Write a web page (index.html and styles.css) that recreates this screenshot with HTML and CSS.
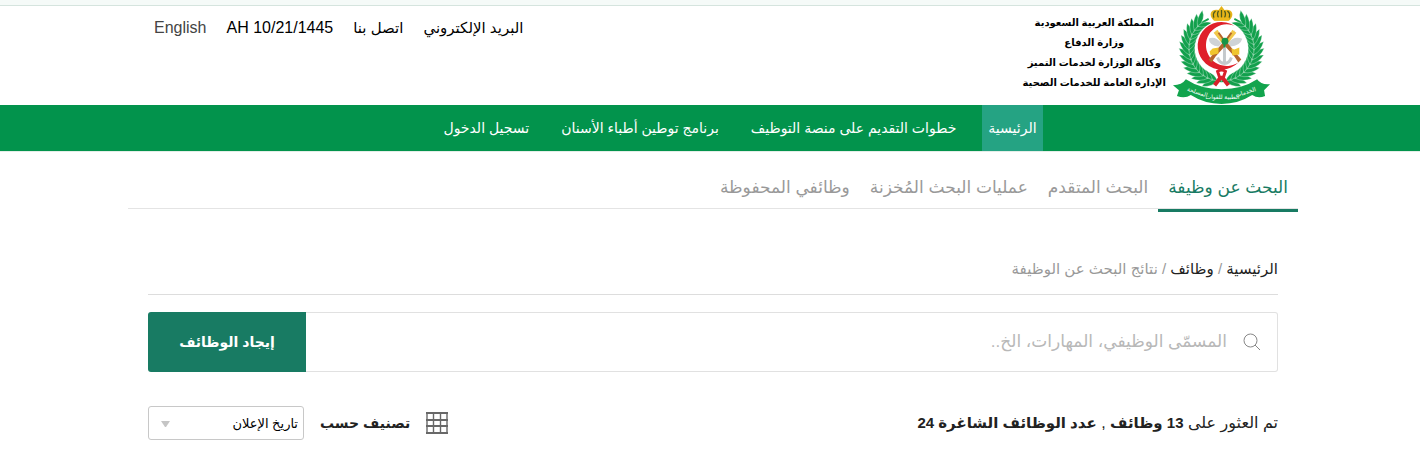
FILE: index.html
```html
<!DOCTYPE html>
<html lang="ar" dir="rtl">
<head>
<meta charset="utf-8">
<meta name="viewport" content="width=device-width, initial-scale=1">
<title>نتائج البحث عن الوظيفة</title>
<link rel="stylesheet" href="styles.css">
</head>
<body>
<div class="top-strip"></div>
<header class="header">
  <div class="brand">
    <svg class="emblem" viewBox="0 0 100 100" role="img" aria-label="شعار الخدمات الصحية">
      <defs>
        <g id="leaf">
          <path d="M17 47Q10 43 8 33Q17 36 18 47Z"/>
          <path d="M17 47Q24 43 24 34Q17 37 17 47Z"/>
        </g>
        <g id="branch">
          <path d="M50 76A33 33 0 0 1 37 13" fill="none" stroke="#16a34f" stroke-width="2"/>
          <use href="#leaf" transform="rotate(-76 50 43)"/>
          <use href="#leaf" transform="rotate(-67 50 43)"/>
          <use href="#leaf" transform="rotate(-58 50 43)"/>
          <use href="#leaf" transform="rotate(-49 50 43)"/>
          <use href="#leaf" transform="rotate(-40 50 43)"/>
          <use href="#leaf" transform="rotate(-31 50 43)"/>
          <use href="#leaf" transform="rotate(-22 50 43)"/>
          <use href="#leaf" transform="rotate(-13 50 43)"/>
          <use href="#leaf" transform="rotate(-4 50 43)"/>
          <use href="#leaf" transform="rotate(5 50 43)"/>
          <use href="#leaf" transform="rotate(14 50 43)"/>
          <use href="#leaf" transform="rotate(23 50 43)"/>
          <use href="#leaf" transform="rotate(32 50 43)"/>
          <use href="#leaf" transform="rotate(41 50 43)"/>
          <use href="#leaf" transform="rotate(50 50 43)"/>
        </g>
        <g id="rifle">
          <path d="M37 54L52 36L55 39L44 51L40 57Z" fill="#b5652c"/>
          <path d="M54 35L61 24L65 27L57 37Z" fill="#f2c84a"/>
          <path d="M52 38L60 27" stroke="#b5652c" stroke-width="2"/>
        </g>
      </defs>
      <g fill="#12a04c" stroke="#fff" stroke-width=".3">
        <use href="#branch"/>
        <use href="#branch" transform="translate(100 0) scale(-1 1)"/>
      </g>
      <circle cx="50" cy="40" r="25" fill="#fff"/>
      <path d="M63 20A24 24 0 1 0 67 57A21 21 0 1 1 63 20Z" fill="#df202a"/>
      <g fill="#cfd3d6">
        <path d="M37 33Q44 30 50 38L47 41Q38 40 37 33ZM71 33Q62 30 56 38L59 41Q69 40 71 33Z"/>
        <path d="M44 24L49 30L51 36L46 32ZM64 24L58 30L55 36L60 32Z"/>
        <path d="M53 42V57M46 52Q48 58 53 58T60 52" fill="none" stroke="#c4c9cc" stroke-width="3"/>
      </g>
      <use href="#rifle"/>
      <use href="#rifle" transform="translate(107 0) scale(-1 1)"/>
      <path d="M38 46L41 43L47 42L47 48L39 50ZM60 43L63 44L68 42V49L61 50Z" fill="#f0c52d"/>
      <circle cx="53.5" cy="35.5" r="3.5" fill="#179447"/>
      <path d="M53 37V42" stroke="#179447" stroke-width="2"/>
      <path d="M39 8Q40 3 47 4L50 0L53 4Q60 3 61 8Q61 12 57 15H43Q39 12 39 8Z" fill="#e6b418"/>
      <path d="M44 5Q40 8 43 13M50 4V12M56 5Q60 8 57 13M47 5Q45 8 47 12M53 5Q55 8 53 12" fill="none" stroke="#4f5a1c" stroke-width="1.3"/>
      <path d="M42 13H58" stroke="#eeb91b" stroke-width="3"/>
      <path d="M1 80Q10 80 14 74Q29 84 50 84T86 74Q90 80 99 79L93 85L94 91Q87 94 81 90Q67 99 50 99T19 90Q13 94 5 91L7 85Z" fill="#12a44d"/>
      <path d="M51 70L43 80M49 70L57 80" stroke="#d9202b" stroke-width="4"/>
      <path d="M46 66Q50 63 54 66L52 72H48Z" fill="#fff" stroke="#d9202b" stroke-width="3"/>
      <g text-anchor="middle" class="emblem-text">
        <text x="75" y="89" transform="rotate(-18 75 89)">الخدمات</text>
        <text x="51" y="94">الطبية للقوات</text>
        <text x="25" y="89" transform="rotate(18 25 89)">المسلحة</text>
      </g>
    </svg>
    <div class="brand-name">
      <span>المملكة العربية السعودية</span>
      <span>وزارة الدفاع</span>
      <span>وكالة الوزارة لخدمات التميز</span>
      <span>الإدارة العامة للخدمات الصحية</span>
    </div>
  </div>
  <div class="utility">
    <a href="#">البريد الإلكتروني</a>
    <a href="#">اتصل بنا</a>
    <span dir="ltr">AH 10/21/1445</span>
    <a href="#" class="language" lang="en">English</a>
  </div>
</header>
<nav class="main-nav" aria-label="القائمة الرئيسية">
  <a href="#" class="active" aria-current="page">الرئيسية</a>
  <a href="#">خطوات التقديم على منصة التوظيف</a>
  <a href="#">برنامج توطين أطباء الأسنان</a>
  <a href="#">تسجيل الدخول</a>
</nav>
<main class="page">
  <nav class="tabs" aria-label="البحث">
    <a href="#" class="selected" aria-current="page">البحث عن وظيفة</a>
    <a href="#">البحث المتقدم</a>
    <a href="#">عمليات البحث المُخزنة</a>
    <a href="#">وظائفي المحفوظة</a>
  </nav>
  <div class="content">
    <nav class="breadcrumb" aria-label="مسار التنقل"><a href="#">الرئيسية</a> / <a href="#">وظائف</a> / <span>نتائج البحث عن الوظيفة</span></nav>
    <form class="search">
      <label class="search-field">
        <svg viewBox="0 0 18 18" class="search-icon" aria-hidden="true"><circle cx="7.5" cy="7.5" r="6.5"/><path d="M12 12L17 17"/></svg>
        <input type="text" placeholder="المسمّى الوظيفي، المهارات، الخ.." aria-label="المسمّى الوظيفي، المهارات، الخ..">
      </label>
      <button type="submit">إيجاد الوظائف</button>
    </form>
    <div class="results">
      <p class="summary">تم العثور على <b>13 وظائف</b> , <b>عدد الوظائف الشاغرة 24</b></p>
      <div class="sorting">
        <button type="button" class="grid-button" aria-label="عرض شبكي"><svg viewBox="0 0 22 22" aria-hidden="true"><path d="M0 1H22M0 8H22M0 14H22M0 21H22" stroke-width="2"/><path d="M1 0V22M7.5 0V22M14.5 0V22M21 0V22" stroke-width="1.4"/></svg></button>
        <label for="sort">تصنيف حسب</label>
        <div class="select-box">
          <select id="sort"><option>تاريخ الإعلان</option></select>
          <svg viewBox="0 0 9 6" class="arrow" aria-hidden="true"><path d="M0 0H9L5 6H4Z"/></svg>
        </div>
      </div>
    </div>
  </div>
</main>
</body>
</html>
```
FILE: styles.css
```css
* { box-sizing: border-box; }
body {
  margin: 0;
  background: #fff;
  color: #222;
  font-family: "Liberation Sans", "DejaVu Sans", sans-serif;
  font-size: 14px;
}
a { color: inherit; text-decoration: none; }
input, button, select { font-family: inherit; }
.top-strip { height: 6px; background: #f5faf8; border-bottom: 1px solid #d5e4de; }
.header {
  display: flex;
  justify-content: space-between;
  align-items: flex-start;
  max-width: 1176px;
  margin: 0 auto;
  padding-right: 27px;
  padding-left: 32px;
}
.brand { display: flex; gap: 6px; }
.emblem { display: block; width: 99px; height: 99px; }
.emblem-text { fill: #fff; font-size: 6px; }
.brand-name {
  display: flex;
  flex-direction: column;
  align-items: center;
  padding-top: 7px;
  color: #000;
  font-size: 10px;
  font-weight: bold;
  line-height: 20px;
  white-space: nowrap;
}
.utility {
  display: flex;
  gap: 20px;
  padding-top: 12px;
  color: #000;
  font-size: 16px;
  line-height: 20px;
  white-space: nowrap;
}
.utility a:not(.language) { font-size: 15px; }
.utility .language { color: #444; }
.main-nav {
  display: flex;
  justify-content: center;
  gap: 20px;
  padding-left: 60px;
  background: #02934c;
  color: #fff;
  border-bottom: 1px solid #e4eee8;
  font-size: 14px;
  line-height: 46px;
  white-space: nowrap;
}
.main-nav a { padding: 0 6px; }
.main-nav .active { background: #25a383; }
.page { max-width: 1176px; margin: 0 auto; padding-left: 6px; }
.tabs {
  display: flex;
  margin-top: 15px;
  border-bottom: 1px solid #e4e4e4;
  color: #999;
  font-size: 17px;
  line-height: 41px;
  white-space: nowrap;
}
.tabs a { padding: 0 10px; }
.tabs .selected { margin-bottom: -4px; border-bottom: 3px solid #187b63; color: #187b63; }
.content { padding: 47px 20px 28px; }
.breadcrumb {
  padding-bottom: 12px;
  border-bottom: 1px solid #ddd;
  color: #999;
  font-size: 15px;
  line-height: 26px;
}
.breadcrumb a { color: #222; }
.search { display: flex; height: 60px; margin-top: 17px; }
.search-field {
  display: flex;
  flex: 1;
  align-items: center;
  gap: 16px;
  padding: 0 16px;
  border: 1px solid #e1e1e1;
  border-left: 0;
  border-radius: 0 3px 3px 0;
}
.search-icon { width: 18px; height: 18px; fill: none; stroke: #888; }
.search-field input {
  flex: 1;
  min-width: 0;
  padding: 0;
  border: 0;
  outline: 0;
  background: transparent;
  font-size: 17px;
}
.search-field input::placeholder { color: #b8b8b8; opacity: 1; }
.search > button {
  width: 158px;
  border: 0;
  border-radius: 3px 0 0 3px;
  background: #187b63;
  color: #fff;
  font-size: 14px;
  font-weight: bold;
}
.results { display: flex; justify-content: space-between; align-items: center; margin-top: 34px; }
.summary { margin: 0; font-size: 16px; line-height: 32px; white-space: nowrap; }
.summary b { font-size: 15px; }
.sorting { display: flex; align-items: center; gap: 16px; white-space: nowrap; }
.sorting label { font-size: 14px; font-weight: bold; }
.grid-button { display: block; padding: 0; border: 0; background: transparent; }
.grid-button svg { display: block; width: 22px; height: 22px; fill: none; stroke: #686868; }
.select-box { position: relative; width: 156px; }
.select-box select {
  width: 100%;
  height: 34px;
  padding: 0 5px;
  border: 1px solid #c8c8c8;
  border-radius: 3px;
  background: #fff;
  color: #000;
  font-size: 13px;
  appearance: none;
}
.arrow { position: absolute; left: 13px; top: 15px; width: 9px; height: 6px; fill: #c5c5c5; pointer-events: none; }
```
